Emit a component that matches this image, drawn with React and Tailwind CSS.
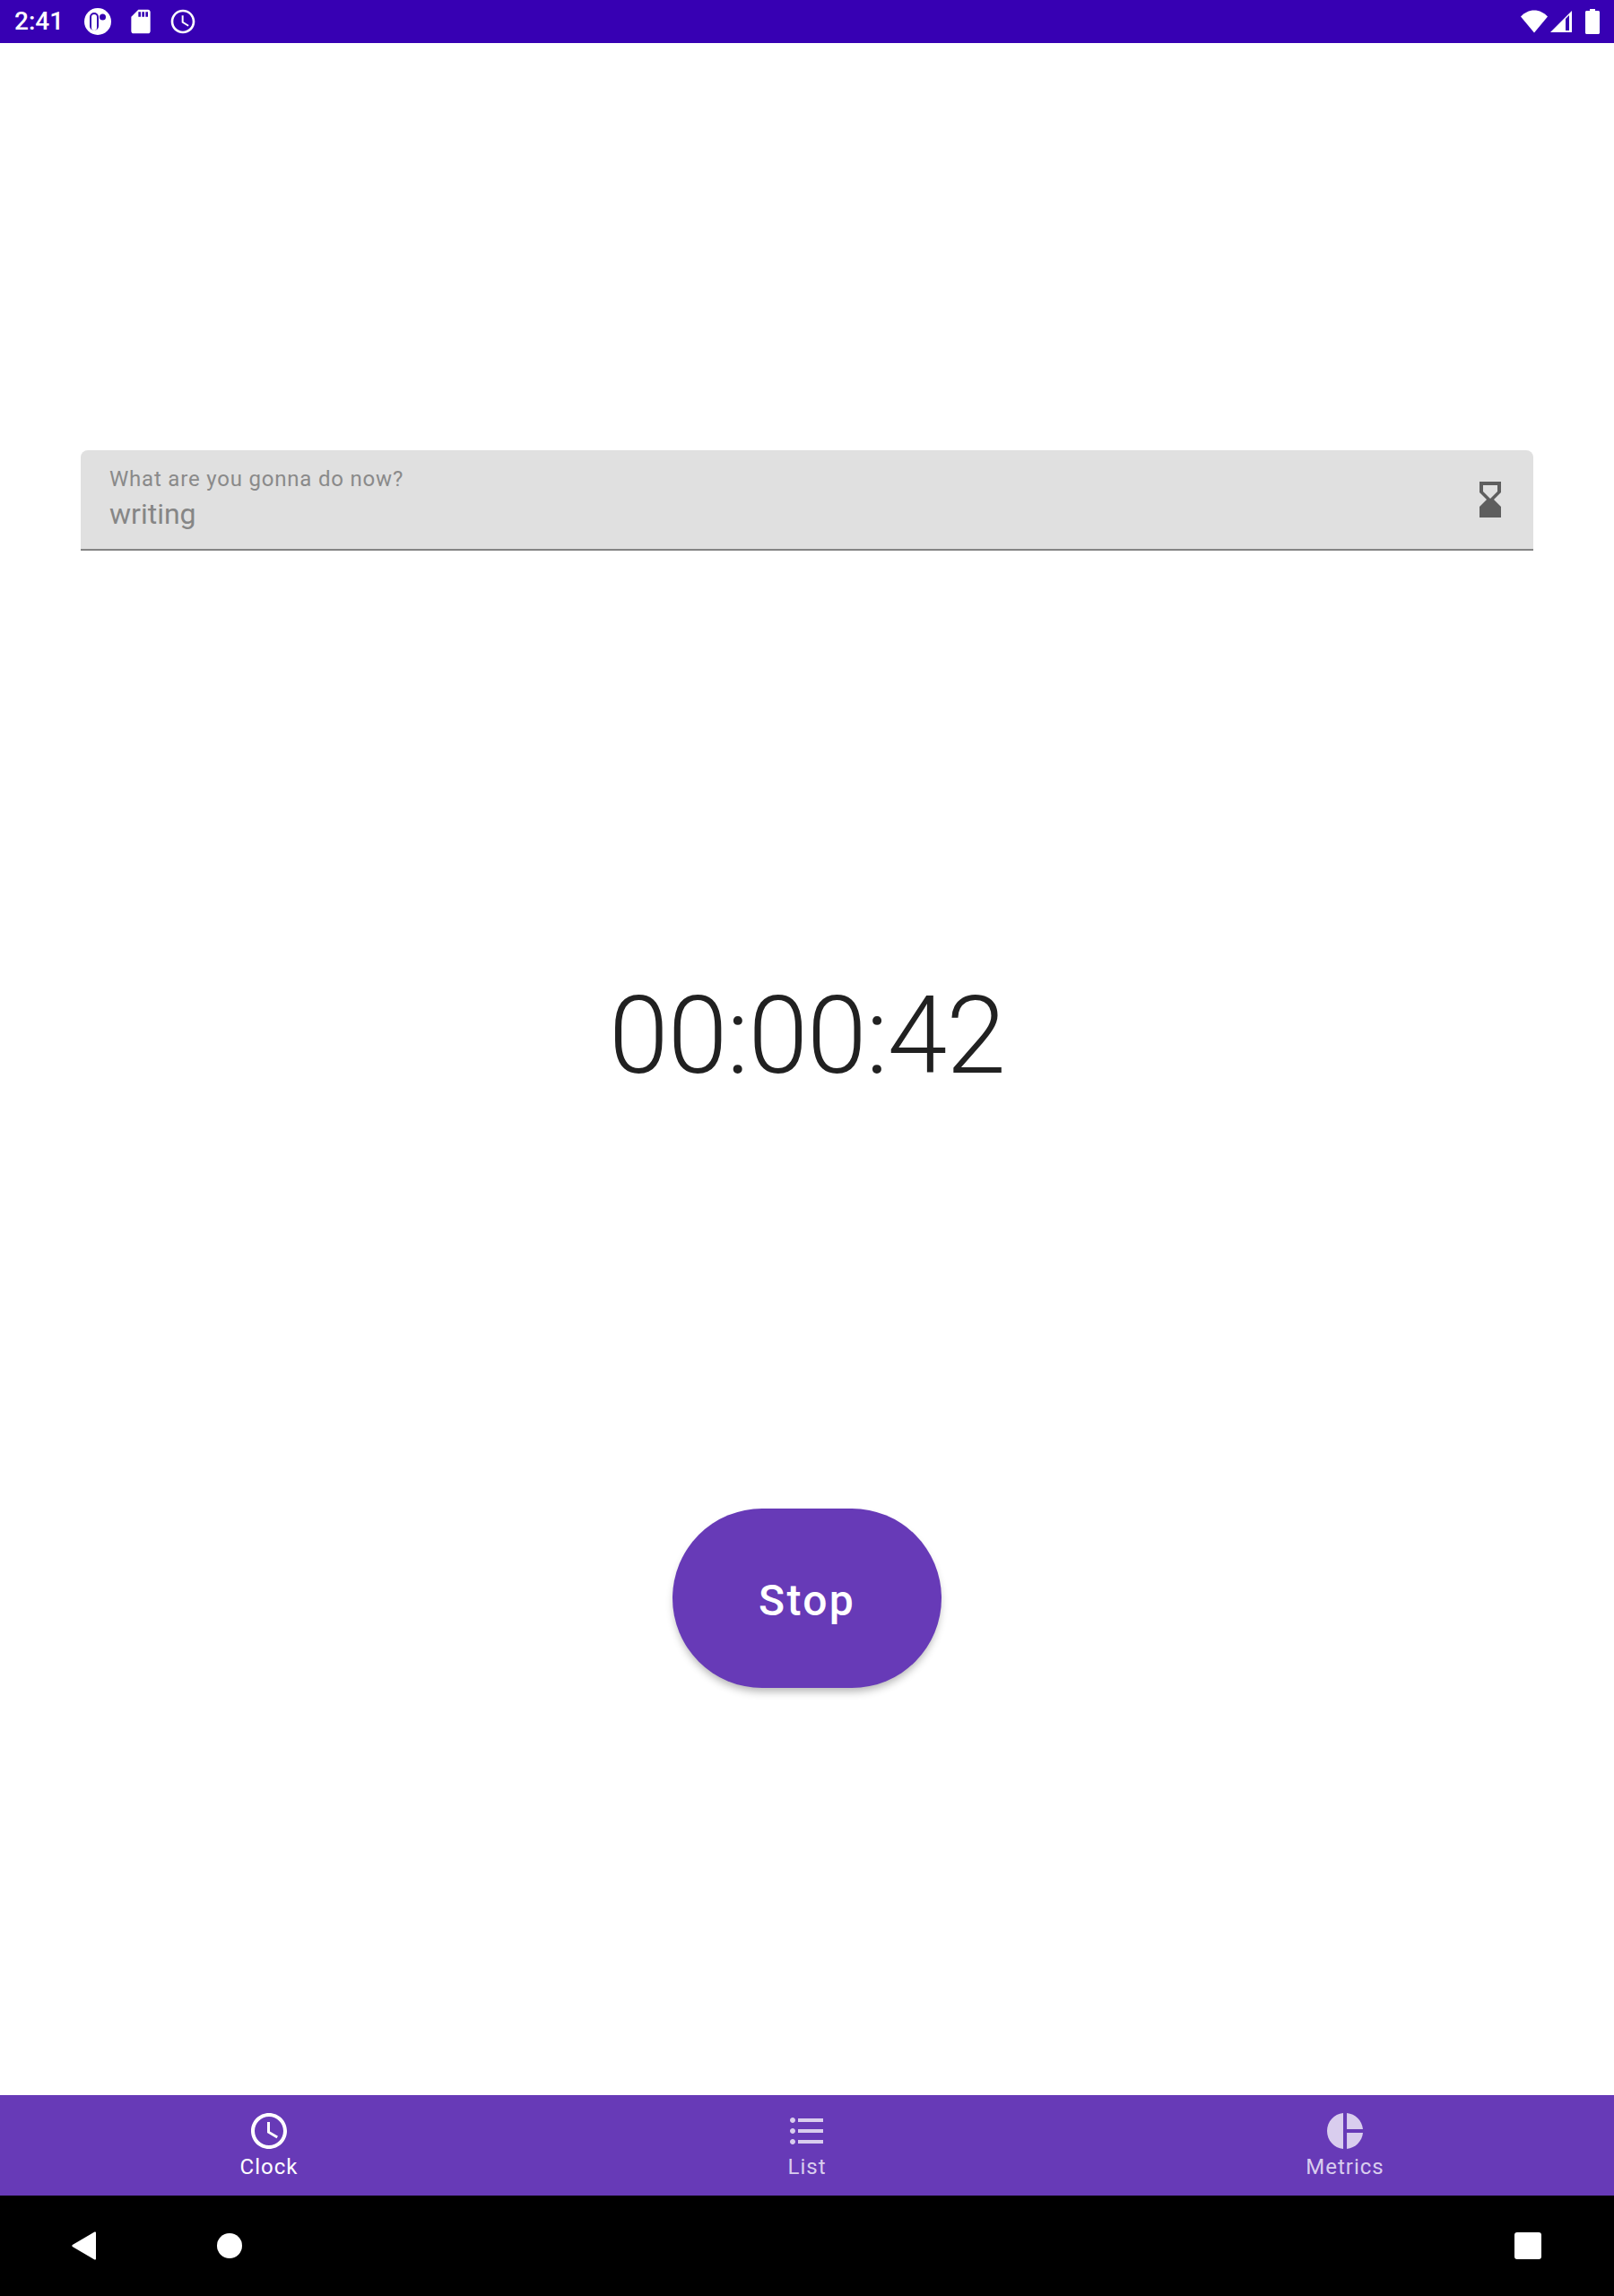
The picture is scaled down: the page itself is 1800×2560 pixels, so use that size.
import React from "react";

const StatusBar = () => (
  <div className="flex h-12 items-center justify-between bg-[#3700b3] pl-[16px] pr-[16px] text-white">
    <div className="flex items-center">
      <span className="w-[52px] text-[28px] font-medium leading-none">2:41</span>
      {/* app logo */}
      <svg className="ml-[25px] h-[32px] w-[32px]" viewBox="0 0 32 32">
        <circle cx="16" cy="16" r="15" fill="#fff" />
        <rect x="7" y="6" width="10" height="20" rx="5" fill="#3700b3" />
        <rect x="9" y="8" width="6" height="18" rx="3" fill="#fff" />
        <circle cx="21.500" cy="11" r="3.500" fill="#3700b3" />
      </svg>
      <svg className="ml-[16px] h-[32px] w-[32px]" viewBox="0 0 24 24" fill="#fff">
        <path d="M18 2h-8L4.020 8 4 20c0 1.100.9 2 2 2h12c1.100 0 2-.9 2-2V4c0-1.100-.9-2-2-2zm-6 6h-2V4h2v4zm3 0h-2V4h2v4zm3 0h-2V4h2v4z" />
      </svg>
      <svg className="ml-[15px] h-[32px] w-[32px]" viewBox="0 0 24 24" fill="#fff">
        <path d="M11.990 2C6.470 2 2 6.480 2 12s4.470 10 9.990 10C17.520 22 22 17.520 22 12S17.520 2 11.990 2zM12 20c-4.420 0-8-3.580-8-8s3.580-8 8-8 8 3.580 8 8-3.580 8-8 8zM12.500 7H11v6l5.250 3.150.750-1.230-4.500-2.670z" />
      </svg>
    </div>
    <div className="flex items-center">
      <svg className="h-[26px] w-[30px]" viewBox="0 0 30 26" fill="#fff">
        <path d="M15 25.500 0 7.500C4 3.200 9.200 0.500 15 0.500s11 2.700 15 7L15 25.500z" />
      </svg>
      <svg className="ml-[2px] h-[26px] w-[26px]" viewBox="0 0 26 26" fill="#fff">
        <path fillRule="evenodd" d="M25 1v24H1L25 1zM22 6l-4 4v13h4V6z" />
      </svg>
      <svg className="ml-[14px] h-[28px] w-[16px]" viewBox="0 0 16 28" fill="#fff">
        <path d="M5 0h6v2h3.500c.8 0 1.500.7 1.500 1.500v23c0 .8-.7 1.500-1.500 1.500h-13C.7 28 0 27.300 0 26.500v-23C0 2.700.7 2 1.500 2H5z" />
      </svg>
    </div>
  </div>
);

const NavItem = ({ label, active, children }) => (
  <div className={`flex flex-1 flex-col items-center pt-[16px] ${active ? "text-white" : "text-[#d9cdee]"}`}>
    <svg className="h-[48px] w-[48px]" viewBox="0 0 24 24" fill="currentColor">
      {children}
    </svg>
    <span className="mt-[2px] text-[24px] leading-[28px] tracking-[1px]">{label}</span>
  </div>
);

export default function App() {
  return (
    <div className="flex h-[2560px] w-[1800px] flex-col overflow-hidden bg-white font-['Roboto',sans-serif]">
      <StatusBar />

      <main className="flex flex-1 flex-col items-center px-[90px] pt-[454px]">
        {/* TEXT FIELD */}
        <div className="flex h-[112px] w-full items-center justify-between rounded-t-[8px] border-b-2 border-[#848484] bg-[#e0e0e0] pl-[32px] pr-[24px]">
          <div className="flex flex-col">
            <span className="mt-[-1px] text-[24px] leading-[28px] tracking-[0.8px] text-[#8a8a8a]">What are you gonna do now?</span>
            <span className="mt-[5px] text-[32px] leading-[40px] text-[#868686]">writing</span>
          </div>
          <svg className="h-[48px] w-[48px]" viewBox="0 0 24 24" fill="#5e5e5e">
            <path d="M18 22l-.01-6L14 12l3.990-4.010L18 2H6v6l4 4-4 3.990V22h12zM8 7.500V4h8v3.500l-4 4-4-4z" />
          </svg>
        </div>

        {/* TIMER */}
        <div className="mt-[471px] text-[120px] font-light leading-[140px] tracking-[-1px] text-[#212121]">00:00:42</div>

        {/* BUTTON */}
        <button className="mt-[457px] h-[200px] w-[300px] rounded-[100px] bg-[#673ab7] pt-[6px] text-[48px] font-medium tracking-[2.3px] text-white shadow-[0_6px_10px_-2px_rgba(0,0,0,0.3)]">
          Stop
        </button>
      </main>

      {/* BOTTOM NAV */}
      <nav className="flex h-[112px] bg-[#673ab7]">
        <NavItem label="Clock" active>
          <path d="M11.990 2C6.470 2 2 6.480 2 12s4.470 10 9.990 10C17.520 22 22 17.520 22 12S17.520 2 11.990 2zM12 20c-4.420 0-8-3.580-8-8s3.580-8 8-8 8 3.580 8 8-3.580 8-8 8zM12.500 7H11v6l5.250 3.150.750-1.230-4.500-2.670z" />
        </NavItem>
        <NavItem label="List">
          <path d="M4 10.500c-.83 0-1.500.67-1.500 1.500s.67 1.500 1.500 1.500 1.500-.67 1.500-1.500-.67-1.500-1.500-1.500zm0-6c-.83 0-1.500.67-1.500 1.500S3.170 7.500 4 7.500 5.500 6.830 5.500 6 4.830 4.500 4 4.500zm0 12c-.83 0-1.500.68-1.500 1.500s.68 1.500 1.500 1.500 1.500-.68 1.500-1.500-.67-1.500-1.500-1.500zM7 19h14v-2H7v2zm0-6h14v-2H7v2zm0-8v2h14V5H7z" />
        </NavItem>
        <NavItem label="Metrics">
          <path d="M11 2v20c-5.070-.5-9-4.790-9-10s3.930-9.500 9-10zm2.030 0v8.990H22c-.47-4.740-4.240-8.520-8.970-8.990zm0 11.010V22c4.740-.47 8.500-4.250 8.970-8.990h-8.970z" />
        </NavItem>
      </nav>

      {/* SYSTEM NAV */}
      <div className="flex h-[112px] items-center justify-between bg-black pl-[80px] pr-[81px]">
        <div className="flex items-center">
          <svg className="h-[32px] w-[28px]" viewBox="0 0 28 32" fill="#fff">
            <path d="M27 1.500v29c0 .9-.8 1.300-1.500.9L.8 16.900c-.6-.4-.6-1.400 0-1.800L25.500.6c.7-.4 1.500 0 1.500.9z" />
          </svg>
          <div className="ml-[134px] h-[28px] w-[28px] rounded-full bg-white" />
        </div>
        <div className="h-[30px] w-[30px] rounded-[3px] bg-white" />
      </div>
    </div>
  );
}
